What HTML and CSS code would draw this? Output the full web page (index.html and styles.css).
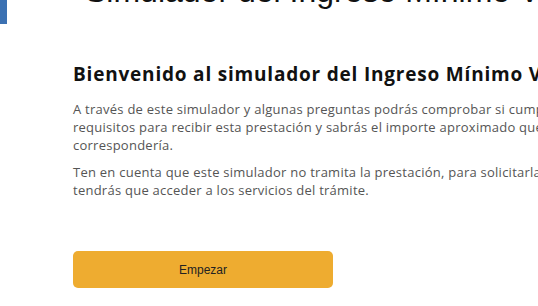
FILE: index.html
```html
<!DOCTYPE html>
<html lang="es">

<head>
    <meta charset="UTF-8">
    <meta name="viewport" content="width=device-width, initial-scale=1.0">
    <title>Simulador del Ingreso Mínimo Vital</title>
    <link rel="stylesheet" href="styles.css">
</head>

<body>
    <div class="top">
        <div class="logo"></div>
        <div class="site-title">Simulador del Ingreso Mínimo Vital</div>
    </div>

    <div class="intro">
        <h2>Bienvenido al simulador del Ingreso Mínimo Vital</h2>
        <p>A través de este simulador y algunas preguntas podrás comprobar si cumples los requisitos para recibir esta prestación y sabrás el importe aproximado que te correspondería.</p>
        <p>Ten en cuenta que este simulador no tramita la prestación, para solicitarla tendrás que acceder a los servicios del trámite.</p>
        <button class="btn-start">Empezar</button>
    </div>
</body>

</html>
```

FILE: styles.css
```css
* {
    margin: 0;
    padding: 0;
    box-sizing: border-box;
}

body {
    background-color: #fff;
    overflow: hidden;
    font-family: "Open Sans", sans-serif;
}

.top {
    display: flex;
    height: 24px;
}

.logo {
    width: 7px;
    height: 24px;
    background-color: #3b71b2;
    flex-shrink: 0;
}

.site-title {
    margin-left: 78px;
    margin-top: -25px;
    font-family: "Liberation Sans", Arial, sans-serif;
    font-size: 32px;
    line-height: 33px;
    color: #111;
    white-space: nowrap;
}

.intro {
    width: 700px;
    padding-left: 73px;
    padding-top: 38px;
}

.intro h2 {
    font-size: 19px;
    font-weight: 700;
    letter-spacing: 0.8px;
    color: #111;
    line-height: 24px;
    white-space: nowrap;
    margin-bottom: 14px;
}

.intro p {
    font-size: 13px;
    line-height: 18px;
    letter-spacing: 0.25px;
    color: #555;
    margin-bottom: 9px;
    width: 520px;
}

.btn-start {
    display: block;
    margin-top: 52px;
    width: 260px;
    height: 37px;
    border: none;
    border-radius: 5px;
    background-color: #eeac30;
    font-family: "Liberation Sans", Arial, sans-serif;
    font-size: 12px;
    color: #222;
}
```
